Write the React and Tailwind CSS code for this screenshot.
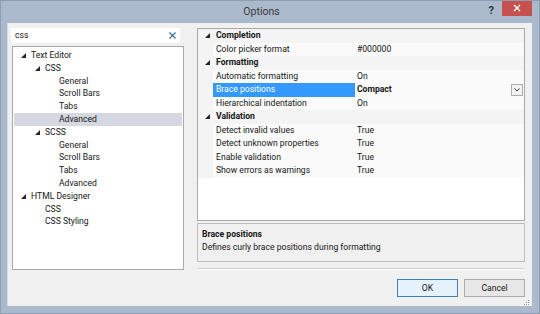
import React from 'react'

const tree = [
  { label: 'Text Editor', level: 0, open: true },
  { label: 'CSS', level: 1, open: true },
  { label: 'General', level: 2 },
  { label: 'Scroll Bars', level: 2 },
  { label: 'Tabs', level: 2 },
  { label: 'Advanced', level: 2, selected: true },
  { label: 'SCSS', level: 1, open: true },
  { label: 'General', level: 2 },
  { label: 'Scroll Bars', level: 2 },
  { label: 'Tabs', level: 2 },
  { label: 'Advanced', level: 2 },
  { label: 'HTML Designer', level: 0, open: true },
  { label: 'CSS', level: 1 },
  { label: 'CSS Styling', level: 1 },
]

const groups = [
  { name: 'Completion', rows: [['Color picker format', '#000000']] },
  {
    name: 'Formatting',
    rows: [
      ['Automatic formatting', 'On'],
      ['Brace positions', 'Compact', true],
      ['Hierarchical indentation', 'On'],
    ],
  },
  {
    name: 'Validation',
    rows: [
      ['Detect invalid values', 'True'],
      ['Detect unknown properties', 'True'],
      ['Enable validation', 'True'],
      ['Show errors as warnings', 'True'],
    ],
  },
]

const indent = ['pl-[7px]', 'pl-[21px]', 'pl-[35px]']

function Expanded() {
  return (
    <svg width="5" height="5" viewBox="0 0 5 5" className="shrink-0">
      <polygon points="5,0 5,5 0,5" fill="#262626" />
    </svg>
  )
}

function TreeRow({ item }) {
  return (
    <div
      className={`flex h-[12.8px] items-center ${indent[item.level]} ${item.selected ? 'bg-[#d5d8e0]' : ''}`}
    >
      <span className="flex w-[10px] justify-start">{item.open && <Expanded />}</span>
      <span className="leading-none">{item.label}</span>
    </div>
  )
}

export default function App() {
  return (
    <div className="flex h-[314px] w-[540px] flex-col overflow-hidden border border-[#8f9db2] bg-[#abb9cd] font-['Roboto',sans-serif] text-[8.6px] text-[#161616]">
      {/* title bar */}
      <div className="relative flex h-[22px] shrink-0 items-center justify-center pr-[17px]">
        <span className="text-[10.5px] text-[#3a3a3a]">Options</span>
        <span className="absolute right-[45px] top-[2px] text-[11px] font-bold text-[#333]">?</span>
        <div className="absolute right-[7px] top-[-1px] flex h-[16px] w-[30px] items-center justify-center bg-[#c7514c]">
          <svg width="8" height="8" viewBox="0 0 8 8">
            <path d="M1 1 L7 7 M7 1 L1 7" stroke="#fff" strokeWidth="1.4" />
          </svg>
        </div>
      </div>

      {/* client area */}
      <div className="ml-[6px] mr-[7px] flex h-[283px] shrink-0 border-l border-[#d6dbe3] bg-[#f0f0f0] pl-[3px] pr-[7px] pt-[5px]">
        {/* left column */}
        <div className="flex w-[173px] shrink-0 flex-col">
          <div className="flex h-[15px] w-[169px] items-center justify-between bg-white pl-[4px] pr-[4px]">
            <span className="leading-none">css</span>
            <svg width="7" height="7" viewBox="0 0 7 7">
              <path d="M0.5 0.5 L6.5 6.5 M6.5 0.5 L0.5 6.5" stroke="#3a6ea5" strokeWidth="1.2" />
            </svg>
          </div>
          <div className="ml-[1px] mt-[3px] h-[224px] border border-[#a9a9a9] bg-white px-[1px] pt-[2px]">
            {tree.map((item, i) => (
              <TreeRow key={i} item={item} />
            ))}
          </div>
        </div>

        {/* right column */}
        <div className="ml-[13px] flex flex-1 flex-col">
          <div className="flex h-[193px] border border-[#a9a9a9] bg-white">
            <div className="w-full">
              {groups.map((g) => (
                <div key={g.name}>
                  <div className="flex h-[13.5px] items-center bg-[#f4f4f4]">
                    <span className="flex w-[18px] justify-center">
                      <Expanded />
                    </span>
                    <span className="font-bold leading-none">{g.name}</span>
                  </div>
                  {g.rows.map(([name, value, sel]) => (
                    <div key={name} className="flex h-[13.5px] items-center">
                      <span className="h-full w-[15px] shrink-0 bg-[#f4f4f4]" />
                      <span
                        className={`flex h-full w-[142px] shrink-0 items-center pl-[3px] ${sel ? 'bg-[#3399ff] text-white' : 'bg-[#fafafa]'}`}
                      >
                        <span className="leading-none">{name}</span>
                      </span>
                      <span className="flex h-full flex-1 items-center justify-between bg-[#fafafa] pl-[2px] pr-[1px]">
                        <span className={`leading-none ${sel ? 'font-bold' : ''}`}>{value}</span>
                        {sel && (
                          <span className="flex h-[12px] w-[12px] items-center justify-center border border-[#adadad] bg-[#f3f3f3]">
                            <svg width="6" height="4" viewBox="0 0 6 4">
                              <path d="M0.5 0.5 L3 3 L5.5 0.5" stroke="#333" strokeWidth="1" fill="none" />
                            </svg>
                          </span>
                        )}
                      </span>
                    </div>
                  ))}
                </div>
              ))}
            </div>
          </div>

          <div className="mt-[2px] h-[39px] border border-[#bdbdbd] bg-[#f0f0f0] px-[4px] pt-[4px]">
            <div className="font-bold leading-[13px]">Brace positions</div>
            <div className="leading-[13px]">Defines curly brace positions during formatting</div>
          </div>

          <div className="mt-[6px] h-[2px] border-b border-t border-b-white border-t-[#d0d0d0]" />

          <div className="mt-[9px] flex justify-end gap-[6px]">
            <button className="h-[18px] w-[61px] border border-[#3c7fb1] bg-[#e5f1fb] text-[8.6px] leading-none">
              OK
            </button>
            <button className="h-[18px] w-[61px] border border-[#acacac] bg-[#e7e7e7] text-[8.6px] leading-none">
              Cancel
            </button>
          </div>
          <div className="mt-[3px] flex justify-end">
            <svg width="6" height="6" viewBox="0 0 6 6" className="mr-[-5px]">
              <rect x="4" y="0" width="1" height="1" fill="#9a9a9a" />
              <rect x="2" y="2" width="1" height="1" fill="#9a9a9a" />
              <rect x="4" y="2" width="1" height="1" fill="#9a9a9a" />
              <rect x="0" y="4" width="1" height="1" fill="#9a9a9a" />
              <rect x="2" y="4" width="1" height="1" fill="#9a9a9a" />
              <rect x="4" y="4" width="1" height="1" fill="#9a9a9a" />
            </svg>
          </div>
        </div>
      </div>
    </div>
  )
}
